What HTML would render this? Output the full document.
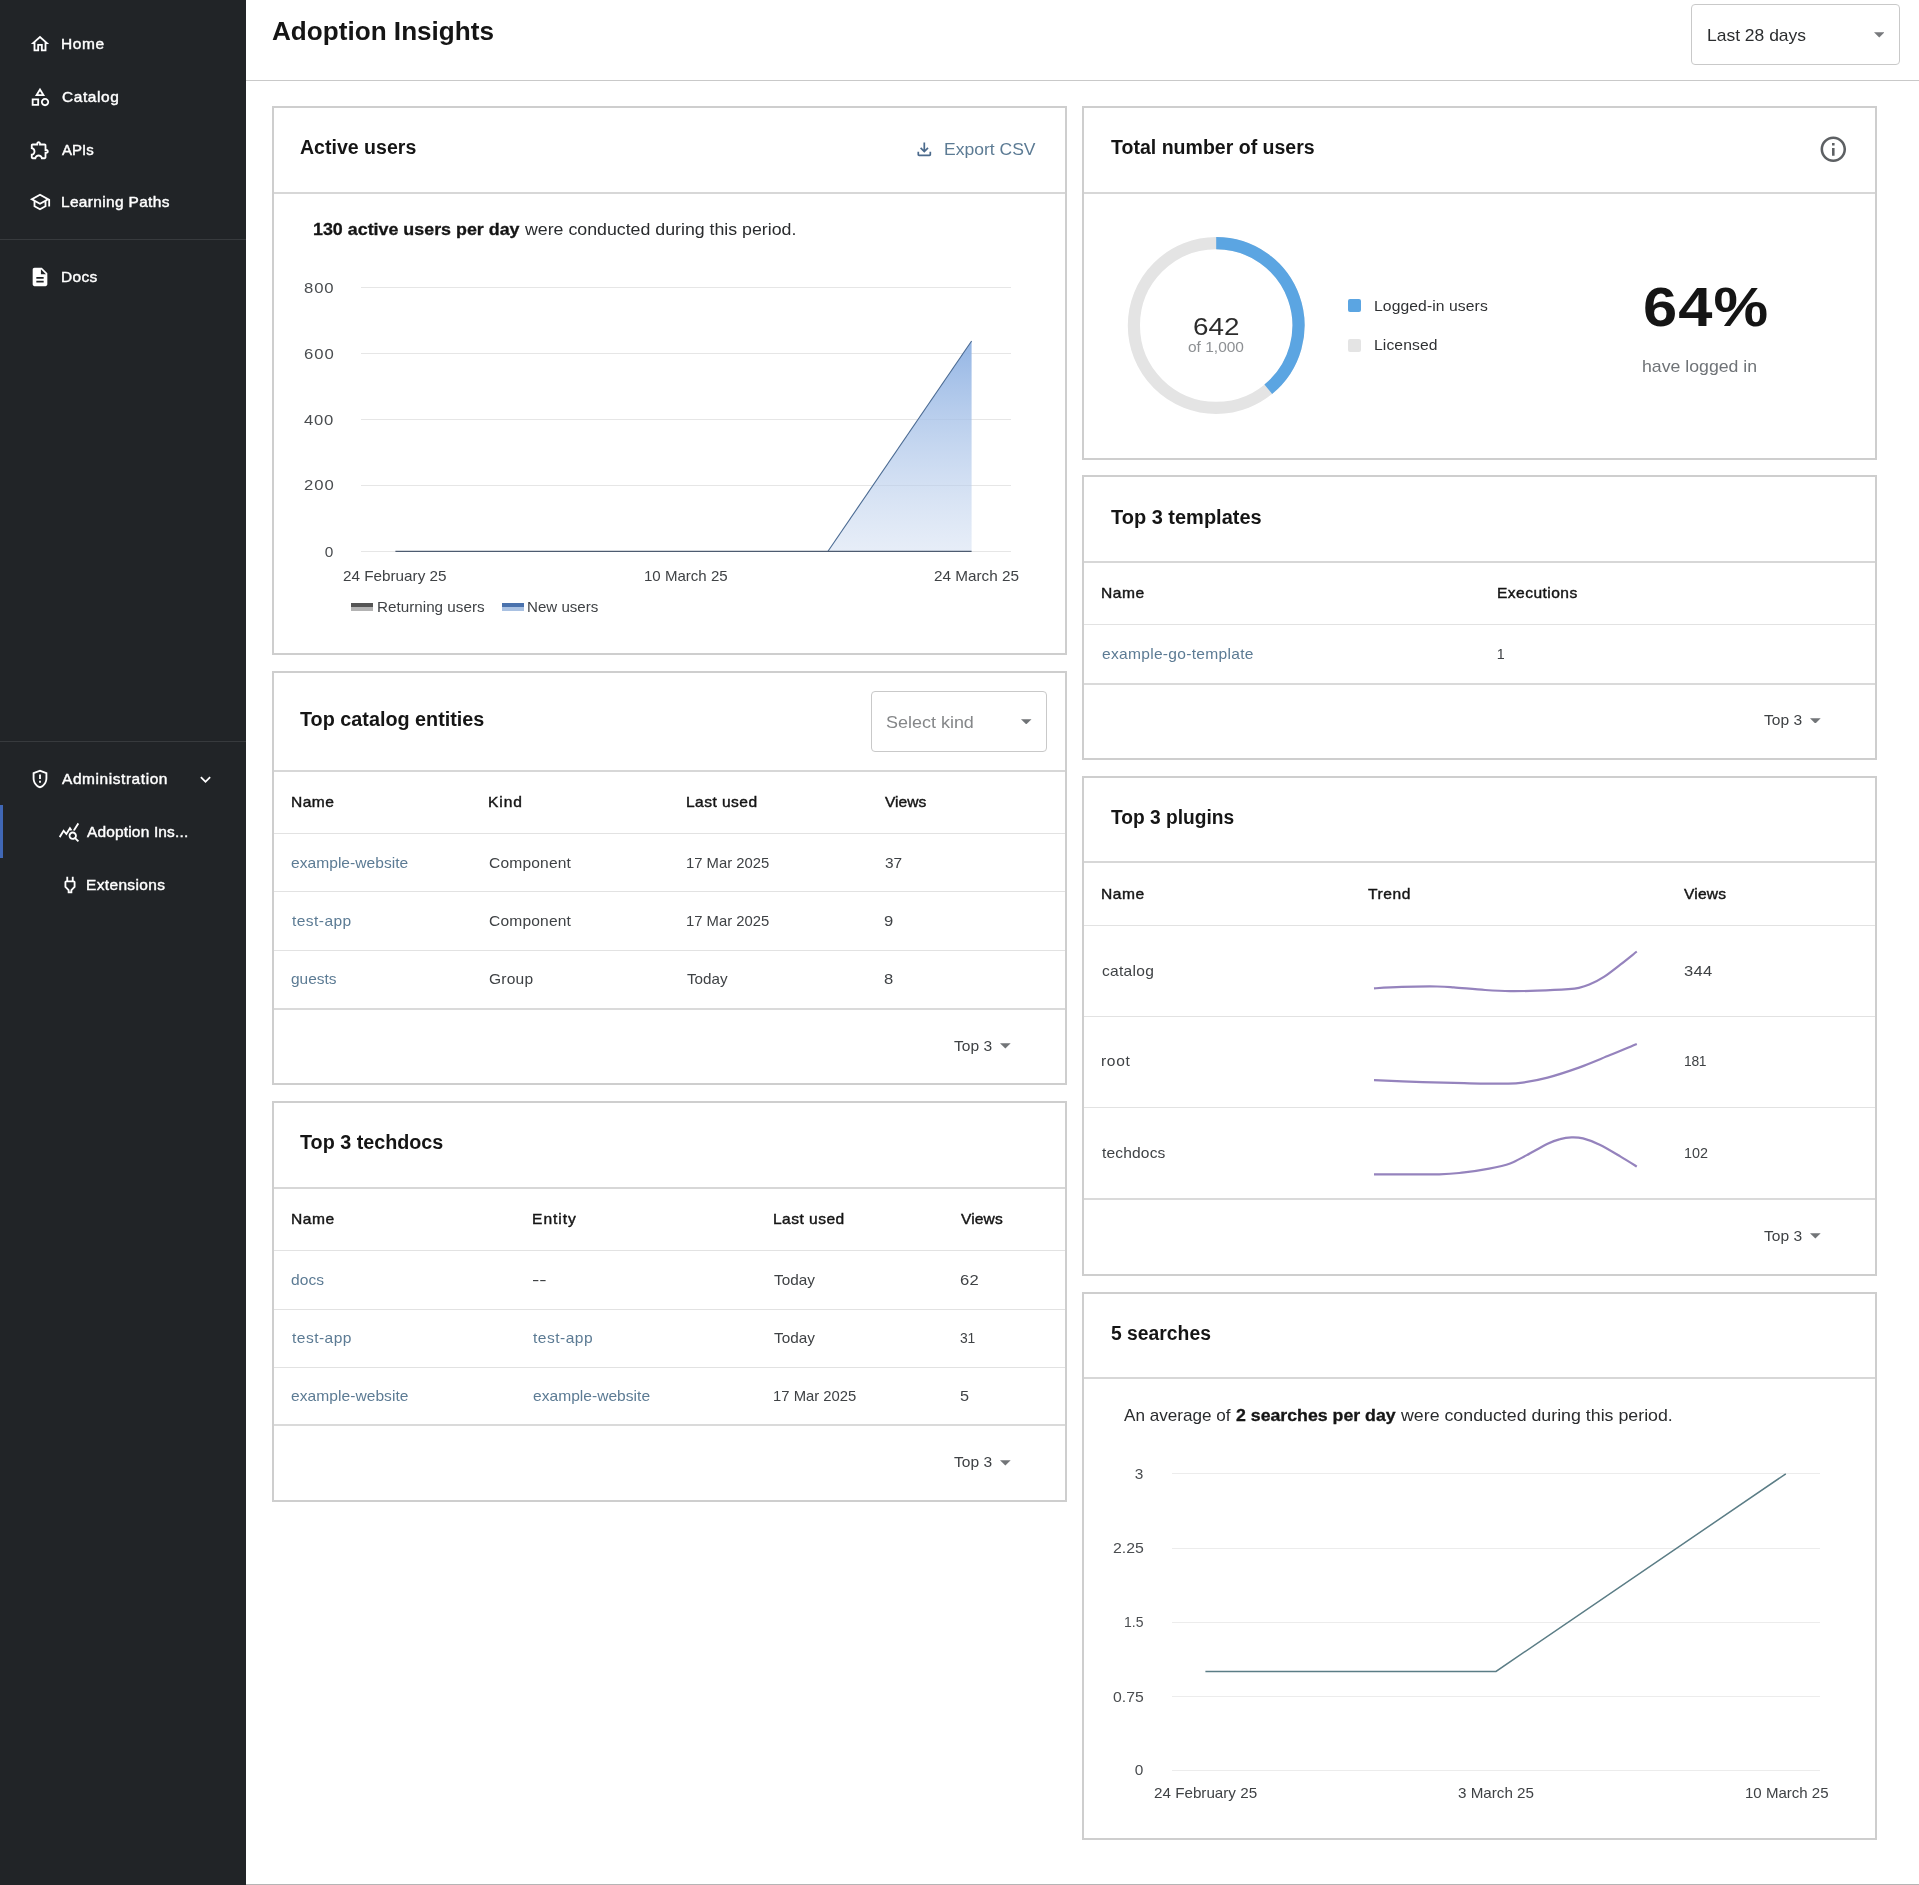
<!DOCTYPE html><html lang="en"><head><meta charset="utf-8"><title>Adoption Insights</title><style>
html,body{margin:0;padding:0;background:#fff}body{width:1919px;height:1885px;position:relative;overflow:hidden;font-family:"Liberation Sans", sans-serif;}
#app{position:absolute;left:0;top:0;width:1919px;height:1885px;will-change:transform}
.t{position:absolute;white-space:nowrap;line-height:1}
</style></head><body><div id="app">
<nav aria-label="Main navigation">
<div style="position:absolute;left:0px;top:0px;width:246px;height:1885px;background:#212427"></div>
<div style="position:absolute;left:0px;top:239px;width:246px;height:1px;background:#373a3d"></div>
<div style="position:absolute;left:0px;top:741px;width:246px;height:1px;background:#373a3d"></div>
<div style="position:absolute;left:0px;top:805px;width:3px;height:53px;background:#4067b5"></div>
<svg style="position:absolute;left:29.00px;top:32.80px" width="22" height="22" viewBox="0 0 24 24"><path fill="#fff" d="m12 5.69 5 4.5V18h-2v-6H9v6H7v-7.81zM12 3 2 12h3v8h6v-6h2v6h6v-8h3z"/></svg>
<svg style="position:absolute;left:29.00px;top:86.10px" width="22" height="22" viewBox="0 0 24 24"><path fill="#fff" d="m12 2-5.5 9h11zm0 3.84L13.93 9h-3.87zM17.5 13c-2.49 0-4.5 2.01-4.5 4.5s2.01 4.5 4.5 4.5 4.5-2.01 4.5-4.5-2.01-4.5-4.5-4.5m0 7c-1.38 0-2.5-1.12-2.5-2.5s1.12-2.5 2.5-2.5 2.5 1.12 2.5 2.5-1.12 2.5-2.5 2.5M3 21.5h8v-8H3zm2-6h4v4H5z"/></svg>
<svg style="position:absolute;left:28.50px;top:139.30px" width="22" height="22" viewBox="0 0 24 24"><path fill="#fff" d="M10.5 4.5c.28 0 .5.22.5.5v2h6v6h2c.28 0 .5.22.5.5s-.22.5-.5.5h-2v6h-2.12c-.68-1.75-2.39-3-4.38-3s-3.7 1.25-4.38 3H4v-2.12c1.75-.68 3-2.39 3-4.38 0-1.99-1.24-3.7-2.99-4.38L4 7h6V5c0-.28.22-.5.5-.5m0-2C9.12 2.5 8 3.62 8 5H4c-1.1 0-1.99.9-1.99 2v3.8h.29c1.49 0 2.7 1.21 2.7 2.7s-1.21 2.7-2.7 2.7H2V20c0 1.1.9 2 2 2h3.8v-.3c0-1.49 1.21-2.7 2.7-2.7s2.7 1.21 2.7 2.7v.3H17c1.1 0 2-.9 2-2v-4c1.38 0 2.5-1.12 2.5-2.5S20.38 11 19 11V7c0-1.1-.9-2-2-2h-4c0-1.38-1.12-2.5-2.5-2.5"/></svg>
<svg style="position:absolute;left:29.00px;top:190.80px" width="22" height="22" viewBox="0 0 24 24"><path fill="#fff" d="M12 3 1 9l4 2.18v6L12 21l7-3.82v-6l2-1.09V17h2V9zm6.82 6L12 12.72 5.18 9 12 5.28zM17 15.99l-5 2.73-5-2.73v-3.72L12 15l5-2.73z"/></svg>
<svg style="position:absolute;left:29.00px;top:266.00px" width="22" height="22" viewBox="0 0 24 24"><path fill="#fff" d="M14 2H6c-1.1 0-1.99.9-1.99 2L4 20c0 1.1.89 2 1.99 2H18c1.1 0 2-.9 2-2V8zm2 16H8v-2h8zm0-4H8v-2h8zm-3-5V3.5L18.5 9z"/></svg>
<svg style="position:absolute;left:29.00px;top:767.80px" width="22" height="22" viewBox="0 0 24 24"><path fill="#fff" d="M12 2 4 5v6.09c0 5.05 3.41 9.76 8 10.91 4.59-1.15 8-5.86 8-10.91V5zm6 9.09c0 4-2.55 7.7-6 8.83-3.45-1.13-6-4.82-6-8.83v-4.7l6-2.25 6 2.25zM11 14h2v2h-2zm0-7h2v5h-2z"/></svg>
<svg style="position:absolute;left:194.50px;top:768.50px" width="21" height="21" viewBox="0 0 24 24"><path fill="#fff" d="M16.59 8.59 12 13.17 7.41 8.59 6 10l6 6 6-6z"/></svg>
<svg style="position:absolute;left:57.50px;top:821.00px" width="22" height="22" viewBox="0 0 24 24"><path fill="#fff" d="M19.88 18.47c.44-.7.7-1.51.7-2.39 0-2.49-2.01-4.5-4.5-4.5s-4.5 2.01-4.5 4.5 2.01 4.5 4.49 4.5c.88 0 1.7-.26 2.39-.7L21.58 23 23 21.58zm-3.8.11c-1.38 0-2.5-1.12-2.5-2.5s1.12-2.5 2.5-2.5 2.5 1.12 2.5 2.5-1.12 2.5-2.5 2.5m-.36-8.5c-.74.02-1.45.18-2.1.45l-.55-.83-3.8 6.18-3.01-3.52-3.63 5.81L1 17l5-8 3 3.5L13 6zm2.59.5c-.64-.28-1.33-.45-2.05-.5L21.38 2 23 3.18z"/></svg>
<svg style="position:absolute;left:58.50px;top:874.00px" width="22" height="22" viewBox="0 0 24 24"><path fill="#fff" d="M16 9v4.66l-3.5 3.51V19h-1v-1.83L8 13.65V9zm0-6h-2v4h-4V3H8v4h-.01C6.9 6.99 6 7.89 6 8.98v5.52L9.5 18v3h5v-3l3.5-3.51V9c0-1.1-.9-2-2-2z"/></svg>
<span class="t" style="left:61.23px;top:37.00px;font-size:14.2px;color:#fff;-webkit-text-stroke:0.4px;letter-spacing:0.578px;transform:scaleX(1.0900);transform-origin:0 0;">Home</span>
<span class="t" style="left:61.71px;top:90.00px;font-size:14.2px;color:#fff;-webkit-text-stroke:0.4px;letter-spacing:0.547px;transform:scaleX(1.0900);transform-origin:0 0;">Catalog</span>
<span class="t" style="left:62.47px;top:143.00px;font-size:14.2px;color:#fff;-webkit-text-stroke:0.4px;transform:scaleX(1.0568);transform-origin:0 0;">APIs</span>
<span class="t" style="left:61.23px;top:195.00px;font-size:14.2px;color:#fff;-webkit-text-stroke:0.4px;letter-spacing:0.309px;transform:scaleX(1.0900);transform-origin:0 0;">Learning Paths</span>
<span class="t" style="left:61.23px;top:270.00px;font-size:14.2px;color:#fff;-webkit-text-stroke:0.4px;letter-spacing:0.334px;transform:scaleX(1.0900);transform-origin:0 0;">Docs</span>
<span class="t" style="left:62.47px;top:772.00px;font-size:14.2px;color:#fff;-webkit-text-stroke:0.4px;letter-spacing:0.525px;transform:scaleX(1.0900);transform-origin:0 0;">Administration</span>
<span class="t" style="left:87.07px;top:825.00px;font-size:14.2px;color:#fff;-webkit-text-stroke:0.4px;letter-spacing:0.156px;transform:scaleX(1.0900);transform-origin:0 0;">Adoption Ins...</span>
<span class="t" style="left:85.83px;top:878.00px;font-size:14.2px;color:#fff;-webkit-text-stroke:0.4px;letter-spacing:0.334px;transform:scaleX(1.0900);transform-origin:0 0;">Extensions</span>
</nav>
<header>
<div style="position:absolute;left:246px;top:80px;width:1673px;height:1px;background:#c9c9c9"></div>
<div style="position:absolute;left:1691px;top:4px;width:207px;height:59px;border:1px solid #c9c9c9;border-radius:4px;box-sizing:content-box"></div>
<svg style="position:absolute;left:1873.75px;top:32.25px" width="10.5" height="5.5" viewBox="0 0 10 5"><path fill="#77797c" d="M0 0h10L5 5z"/></svg>
<div style="position:absolute;left:246px;top:1884px;width:1673px;height:1px;background:#b5b5b5"></div>
<span class="t" style="left:272.35px;top:19.00px;font-size:25.6px;color:#151515;font-weight:700;transform:scaleX(1.0207);transform-origin:0 0;">Adoption Insights</span>
<span class="t" style="left:1706.77px;top:27.00px;font-size:17px;color:#2b2d2f;transform:scaleX(1.0276);transform-origin:0 0;">Last 28 days</span>
</header>
<div class="cards">
<div style="position:absolute;left:272px;top:106px;width:791px;height:545px;border:2px solid #cecece;background:#fff"></div>
<div style="position:absolute;left:274px;top:192px;width:791px;height:2px;background:#d7d7d7"></div>
<div style="position:absolute;left:272px;top:671px;width:791px;height:410px;border:2px solid #cecece;background:#fff"></div>
<div style="position:absolute;left:274px;top:770px;width:791px;height:2px;background:#d7d7d7"></div>
<div style="position:absolute;left:272px;top:1101px;width:791px;height:397px;border:2px solid #cecece;background:#fff"></div>
<div style="position:absolute;left:274px;top:1187px;width:791px;height:2px;background:#d7d7d7"></div>
<div style="position:absolute;left:1082px;top:106px;width:791px;height:350px;border:2px solid #cecece;background:#fff"></div>
<div style="position:absolute;left:1084px;top:192px;width:791px;height:2px;background:#d7d7d7"></div>
<div style="position:absolute;left:1082px;top:475px;width:791px;height:281px;border:2px solid #cecece;background:#fff"></div>
<div style="position:absolute;left:1084px;top:561px;width:791px;height:2px;background:#d7d7d7"></div>
<div style="position:absolute;left:1082px;top:776px;width:791px;height:496px;border:2px solid #cecece;background:#fff"></div>
<div style="position:absolute;left:1084px;top:861px;width:791px;height:2px;background:#d7d7d7"></div>
<div style="position:absolute;left:1082px;top:1292px;width:791px;height:544px;border:2px solid #cecece;background:#fff"></div>
<div style="position:absolute;left:1084px;top:1377px;width:791px;height:2px;background:#d7d7d7"></div>
</div>
<section aria-label="Active users">
<svg style="position:absolute;left:913.50px;top:139.10px" width="20.6" height="20.6" viewBox="0 0 24 24"><path fill="#4b6a8c" d="M18 15v3H6v-3H4v3c0 1.1.9 2 2 2h12c1.1 0 2-.9 2-2v-3zm-1-4-1.41-1.41L13 12.17V4h-2v8.17L8.41 9.59 7 11l5 5z"/></svg>
<div style="position:absolute;left:361px;top:287.4px;width:650px;height:1px;background:#e6e6e6"></div>
<div style="position:absolute;left:361px;top:353.3px;width:650px;height:1px;background:#e6e6e6"></div>
<div style="position:absolute;left:361px;top:419.3px;width:650px;height:1px;background:#e6e6e6"></div>
<div style="position:absolute;left:361px;top:485.2px;width:650px;height:1px;background:#e6e6e6"></div>
<div style="position:absolute;left:361px;top:551.2px;width:650px;height:1px;background:#e6e6e6"></div>
<svg style="position:absolute;left:272px;top:106px" width="795" height="549" viewBox="272 106 795 549">
<defs><linearGradient id="ga" x1="0" y1="0" x2="0" y2="1"><stop offset="0" stop-color="#8fb2e3" stop-opacity="0.95"/><stop offset="1" stop-color="#c9d8ef" stop-opacity="0.45"/></linearGradient></defs>
<path d="M395.4 551.2 L828 551.2 L971.6 341 L971.6 551.2 Z" fill="url(#ga)"/>
<path d="M828 551.2 L971.6 341" fill="none" stroke="#4a6a92" stroke-width="1.1"/>
<path d="M395.4 551.3 L971.6 551.3" fill="none" stroke="#4d5b70" stroke-width="1.2"/>
</svg>
<div style="position:absolute;left:351.2px;top:603px;width:21.8px;height:4.3px;background:#555"></div>
<div style="position:absolute;left:351.2px;top:607.3px;width:21.8px;height:3.9px;background:#b3b3b3"></div>
<div style="position:absolute;left:502.3px;top:603px;width:21.6px;height:4.3px;background:#4a72ad"></div>
<div style="position:absolute;left:502.3px;top:607.3px;width:21.6px;height:3.9px;background:#a9c1e2"></div>
<span class="t" style="left:300.11px;top:138.00px;font-size:19.4px;color:#151515;font-weight:700;transform:scaleX(1.0082);transform-origin:0 0;">Active users</span>
<span class="t" style="left:943.56px;top:142.00px;font-size:16.6px;color:#5c7b94;transform:scaleX(1.0555);transform-origin:0 0;">Export CSV</span>
<span class="t" style="left:313.07px;top:222.00px;font-size:16.6px;color:#151515;font-weight:700;-webkit-text-stroke:0.3px;transform:scaleX(1.0763);transform-origin:0 0;">130 active users per day</span>
<span class="t" style="left:525.23px;top:222.00px;font-size:16.6px;color:#2a2c2e;transform:scaleX(1.0699);transform-origin:0 0;">were conducted during this period.</span>
<span class="t" style="left:303.97px;top:281.00px;font-size:14.4px;color:#4a4d50;letter-spacing:0.742px;transform:scaleX(1.1600);transform-origin:0 0;">800</span>
<span class="t" style="left:303.85px;top:347.00px;font-size:14.4px;color:#4a4d50;letter-spacing:0.794px;transform:scaleX(1.1600);transform-origin:0 0;">600</span>
<span class="t" style="left:304.32px;top:413.00px;font-size:14.4px;color:#4a4d50;letter-spacing:0.594px;transform:scaleX(1.1600);transform-origin:0 0;">400</span>
<span class="t" style="left:303.86px;top:478.00px;font-size:14.4px;color:#4a4d50;letter-spacing:0.791px;transform:scaleX(1.1600);transform-origin:0 0;">200</span>
<span class="t" style="left:324.74px;top:544.00px;font-size:15.4px;color:#4a4d50;">0</span>
<span class="t" style="left:343.13px;top:569.00px;font-size:14.4px;color:#3f4245;transform:scaleX(1.0606);transform-origin:0 0;">24 February 25</span>
<span class="t" style="left:643.65px;top:569.00px;font-size:14.4px;color:#3f4245;transform:scaleX(1.0460);transform-origin:0 0;">10 March 25</span>
<span class="t" style="left:934.03px;top:569.00px;font-size:14.4px;color:#3f4245;transform:scaleX(1.0627);transform-origin:0 0;">24 March 25</span>
<span class="t" style="left:376.75px;top:600.00px;font-size:14.4px;color:#3f4245;transform:scaleX(1.0591);transform-origin:0 0;">Returning users</span>
<span class="t" style="left:527.46px;top:600.00px;font-size:14.4px;color:#3f4245;transform:scaleX(1.0485);transform-origin:0 0;">New users</span>
</section>
<section aria-label="Top catalog entities">
<div style="position:absolute;left:871px;top:691px;width:174px;height:59px;border:1px solid #c9c9c9;border-radius:4px"></div>
<svg style="position:absolute;left:1021.15px;top:718.75px" width="10.5" height="5.5" viewBox="0 0 10 5"><path fill="#707376" d="M0 0h10L5 5z"/></svg>
<div style="position:absolute;left:274px;top:833px;width:791px;height:1px;background:#e2e2e2"></div>
<div style="position:absolute;left:274px;top:891px;width:791px;height:1px;background:#e2e2e2"></div>
<div style="position:absolute;left:274px;top:949.5px;width:791px;height:1px;background:#e2e2e2"></div>
<div style="position:absolute;left:274px;top:1007.5px;width:791px;height:2px;background:#dadada"></div>
<svg style="position:absolute;left:999.95px;top:1043.40px" width="10.7" height="5.8" viewBox="0 0 10 5"><path fill="#727578" d="M0 0h10L5 5z"/></svg>
<span class="t" style="left:300.48px;top:710.00px;font-size:19.4px;color:#151515;font-weight:700;transform:scaleX(1.0204);transform-origin:0 0;">Top catalog entities</span>
<span class="t" style="left:886.08px;top:714.00px;font-size:17px;color:#858789;transform:scaleX(1.0565);transform-origin:0 0;">Select kind</span>
<span class="t" style="left:290.82px;top:795.00px;font-size:14.3px;color:#151515;-webkit-text-stroke:0.4px;letter-spacing:0.428px;transform:scaleX(1.0900);transform-origin:0 0;">Name</span>
<span class="t" style="left:488.32px;top:795.00px;font-size:14.3px;color:#151515;-webkit-text-stroke:0.4px;letter-spacing:0.820px;transform:scaleX(1.0900);transform-origin:0 0;">Kind</span>
<span class="t" style="left:686.02px;top:795.00px;font-size:14.3px;color:#151515;-webkit-text-stroke:0.4px;letter-spacing:0.402px;transform:scaleX(1.0900);transform-origin:0 0;">Last used</span>
<span class="t" style="left:885.03px;top:795.00px;font-size:14.3px;color:#151515;-webkit-text-stroke:0.4px;letter-spacing:0.007px;transform:scaleX(1.0900);transform-origin:0 0;">Views</span>
<span class="t" style="left:291.44px;top:856.00px;font-size:14.3px;color:#5c7b94;letter-spacing:0.021px;transform:scaleX(1.0900);transform-origin:0 0;">example-website</span>
<span class="t" style="left:488.81px;top:856.00px;font-size:14.3px;color:#3f4245;letter-spacing:0.153px;transform:scaleX(1.0900);transform-origin:0 0;">Component</span>
<span class="t" style="left:686.17px;top:856.00px;font-size:14.3px;color:#3f4245;transform:scaleX(1.0370);transform-origin:0 0;">17 Mar 2025</span>
<span class="t" style="left:884.51px;top:856.00px;font-size:14.3px;color:#3f4245;transform:scaleX(1.0791);transform-origin:0 0;">37</span>
<span class="t" style="left:291.86px;top:914.00px;font-size:14.3px;color:#5c7b94;letter-spacing:0.389px;transform:scaleX(1.0900);transform-origin:0 0;">test-app</span>
<span class="t" style="left:488.81px;top:914.00px;font-size:14.3px;color:#3f4245;letter-spacing:0.153px;transform:scaleX(1.0900);transform-origin:0 0;">Component</span>
<span class="t" style="left:686.17px;top:914.00px;font-size:14.3px;color:#3f4245;transform:scaleX(1.0370);transform-origin:0 0;">17 Mar 2025</span>
<span class="t" style="left:884.32px;top:914.00px;font-size:14.3px;color:#3f4245;transform:scaleX(1.1600);transform-origin:0 0;">9</span>
<span class="t" style="left:291.45px;top:972.00px;font-size:14.3px;color:#5c7b94;transform:scaleX(1.0827);transform-origin:0 0;">guests</span>
<span class="t" style="left:488.82px;top:972.00px;font-size:14.3px;color:#3f4245;letter-spacing:0.186px;transform:scaleX(1.0900);transform-origin:0 0;">Group</span>
<span class="t" style="left:686.96px;top:972.00px;font-size:14.3px;color:#3f4245;transform:scaleX(1.0659);transform-origin:0 0;">Today</span>
<span class="t" style="left:884.38px;top:972.00px;font-size:14.3px;color:#3f4245;transform:scaleX(1.1600);transform-origin:0 0;">8</span>
<span class="t" style="left:953.85px;top:1039.00px;font-size:14.3px;color:#3f4245;transform:scaleX(1.0900);transform-origin:0 0;">Top 3</span>
</section>
<section aria-label="Top 3 techdocs">
<div style="position:absolute;left:274px;top:1250px;width:791px;height:1px;background:#e2e2e2"></div>
<div style="position:absolute;left:274px;top:1308.5px;width:791px;height:1px;background:#e2e2e2"></div>
<div style="position:absolute;left:274px;top:1366.8px;width:791px;height:1px;background:#e2e2e2"></div>
<div style="position:absolute;left:274px;top:1424.3px;width:791px;height:2px;background:#dadada"></div>
<svg style="position:absolute;left:999.85px;top:1460.10px" width="10.7" height="5.8" viewBox="0 0 10 5"><path fill="#727578" d="M0 0h10L5 5z"/></svg>
<span class="t" style="left:300.38px;top:1133.00px;font-size:19.4px;color:#151515;font-weight:700;transform:scaleX(1.0181);transform-origin:0 0;">Top 3 techdocs</span>
<span class="t" style="left:290.82px;top:1212.00px;font-size:14.3px;color:#151515;-webkit-text-stroke:0.4px;letter-spacing:0.458px;transform:scaleX(1.0900);transform-origin:0 0;">Name</span>
<span class="t" style="left:532.12px;top:1212.00px;font-size:14.3px;color:#151515;-webkit-text-stroke:0.4px;letter-spacing:0.904px;transform:scaleX(1.0900);transform-origin:0 0;">Entity</span>
<span class="t" style="left:772.92px;top:1212.00px;font-size:14.3px;color:#151515;-webkit-text-stroke:0.4px;letter-spacing:0.413px;transform:scaleX(1.0900);transform-origin:0 0;">Last used</span>
<span class="t" style="left:960.63px;top:1212.00px;font-size:14.3px;color:#151515;-webkit-text-stroke:0.4px;letter-spacing:0.099px;transform:scaleX(1.0900);transform-origin:0 0;">Views</span>
<span class="t" style="left:291.45px;top:1273.00px;font-size:14.3px;color:#5c7b94;letter-spacing:0.029px;transform:scaleX(1.0900);transform-origin:0 0;">docs</span>
<span class="t" style="left:532.42px;top:1273.00px;font-size:14.3px;color:#3f4245;transform:scaleX(1.5374);transform-origin:0 0;">--</span>
<span class="t" style="left:773.86px;top:1273.00px;font-size:14.3px;color:#3f4245;transform:scaleX(1.0712);transform-origin:0 0;">Today</span>
<span class="t" style="left:959.86px;top:1273.00px;font-size:14.3px;color:#3f4245;letter-spacing:0.194px;transform:scaleX(1.1600);transform-origin:0 0;">62</span>
<span class="t" style="left:291.86px;top:1331.00px;font-size:14.3px;color:#5c7b94;letter-spacing:0.415px;transform:scaleX(1.0900);transform-origin:0 0;">test-app</span>
<span class="t" style="left:533.16px;top:1331.00px;font-size:14.3px;color:#5c7b94;letter-spacing:0.428px;transform:scaleX(1.0900);transform-origin:0 0;">test-app</span>
<span class="t" style="left:773.86px;top:1331.00px;font-size:14.3px;color:#3f4245;transform:scaleX(1.0712);transform-origin:0 0;">Today</span>
<span class="t" style="left:960.17px;top:1331.00px;font-size:14.3px;color:#3f4245;letter-spacing:-0.300px;transform:scaleX(0.9700);transform-origin:0 0;">31</span>
<span class="t" style="left:291.44px;top:1389.00px;font-size:14.3px;color:#5c7b94;letter-spacing:0.034px;transform:scaleX(1.0900);transform-origin:0 0;">example-website</span>
<span class="t" style="left:532.74px;top:1389.00px;font-size:14.3px;color:#5c7b94;letter-spacing:0.008px;transform:scaleX(1.0900);transform-origin:0 0;">example-website</span>
<span class="t" style="left:773.07px;top:1389.00px;font-size:14.3px;color:#3f4245;transform:scaleX(1.0383);transform-origin:0 0;">17 Mar 2025</span>
<span class="t" style="left:960.05px;top:1389.00px;font-size:14.3px;color:#3f4245;transform:scaleX(1.1357);transform-origin:0 0;">5</span>
<span class="t" style="left:953.75px;top:1455.00px;font-size:14.3px;color:#3f4245;transform:scaleX(1.0900);transform-origin:0 0;">Top 3</span>
</section>
<section aria-label="Total number of users">
<svg style="position:absolute;left:1817.70px;top:134.00px" width="30.6" height="30.6" viewBox="0 0 24 24"><path fill="#5d6063" d="M11 7h2v2h-2zm0 4h2v6h-2zm1-9C6.48 2 2 6.48 2 12s4.48 10 10 10 10-4.48 10-10S17.52 2 12 2m0 18c-4.41 0-8-3.59-8-8s3.59-8 8-8 8 3.59 8 8-3.59 8-8 8"/></svg>
<svg style="position:absolute;left:1100px;top:220px" width="240" height="220" viewBox="1100 220 240 220">
<circle cx="1216.2" cy="325.5" r="82.3" fill="none" stroke="#e4e4e4" stroke-width="12.2"/>
<path d="M1216.2 243.2 A82.3 82.3 0 0 1 1268.27 389.24" fill="none" stroke="#5ba5e2" stroke-width="12.2"/>
</svg>
<div style="position:absolute;left:1348px;top:299px;width:13px;height:13px;background:#5ba5e2;border-radius:2px"></div>
<div style="position:absolute;left:1348px;top:339px;width:13px;height:13px;background:#e4e4e4;border-radius:2px"></div>
<span class="t" style="left:1110.78px;top:138.00px;font-size:19.4px;color:#151515;font-weight:700;transform:scaleX(1.0075);transform-origin:0 0;">Total number of users</span>
<span class="t" style="left:1192.99px;top:315.00px;font-size:24px;color:#151515;opacity:.9;transform:scaleX(1.1589);transform-origin:0 0;">642</span>
<span class="t" style="left:1188.20px;top:340.00px;font-size:14.2px;color:#8d9093;letter-spacing:0.008px;transform:scaleX(1.0900);transform-origin:0 0;">of 1,000</span>
<span class="t" style="left:1373.51px;top:299.00px;font-size:14.4px;color:#2f3133;letter-spacing:0.083px;transform:scaleX(1.0900);transform-origin:0 0;">Logged-in users</span>
<span class="t" style="left:1373.51px;top:338.00px;font-size:14.4px;color:#2f3133;letter-spacing:0.092px;transform:scaleX(1.0900);transform-origin:0 0;">Licensed</span>
<span class="t" style="left:1642.95px;top:279.00px;font-size:56.4px;color:#151515;font-weight:700;letter-spacing:0.935px;transform:scaleX(1.0900);transform-origin:0 0;">64%</span>
<span class="t" style="left:1642.27px;top:358.00px;font-size:17px;color:#6f7377;transform:scaleX(1.0405);transform-origin:0 0;">have logged in</span>
</section>
<section aria-label="Top 3 templates">
<div style="position:absolute;left:1084px;top:624.3px;width:791px;height:1px;background:#e2e2e2"></div>
<div style="position:absolute;left:1084px;top:682.5px;width:791px;height:2px;background:#dadada"></div>
<svg style="position:absolute;left:1810.35px;top:717.50px" width="10.7" height="5.8" viewBox="0 0 10 5"><path fill="#727578" d="M0 0h10L5 5z"/></svg>
<span class="t" style="left:1111.38px;top:508.00px;font-size:19.4px;color:#151515;font-weight:700;transform:scaleX(1.0305);transform-origin:0 0;">Top 3 templates</span>
<span class="t" style="left:1100.92px;top:586.00px;font-size:14.3px;color:#151515;-webkit-text-stroke:0.4px;letter-spacing:0.489px;transform:scaleX(1.0900);transform-origin:0 0;">Name</span>
<span class="t" style="left:1496.52px;top:586.00px;font-size:14.3px;color:#151515;-webkit-text-stroke:0.4px;letter-spacing:0.409px;transform:scaleX(1.0900);transform-origin:0 0;">Executions</span>
<span class="t" style="left:1101.54px;top:647.00px;font-size:14.3px;color:#5c7b94;letter-spacing:0.258px;transform:scaleX(1.0900);transform-origin:0 0;">example-go-template</span>
<span class="t" style="left:1496.71px;top:647.00px;font-size:14.3px;color:#3f4245;">1</span>
<span class="t" style="left:1764.25px;top:713.00px;font-size:14.3px;color:#3f4245;transform:scaleX(1.0900);transform-origin:0 0;">Top 3</span>
</section>
<section aria-label="Top 3 plugins">
<div style="position:absolute;left:1084px;top:924.5px;width:791px;height:1px;background:#e2e2e2"></div>
<div style="position:absolute;left:1084px;top:1015.6px;width:791px;height:1px;background:#e2e2e2"></div>
<div style="position:absolute;left:1084px;top:1106.8px;width:791px;height:1px;background:#e2e2e2"></div>
<div style="position:absolute;left:1084px;top:1197.8px;width:791px;height:2px;background:#dadada"></div>
<svg style="position:absolute;left:1360px;top:930px" width="300" height="260" viewBox="1360 930 300 260" fill="none" stroke="#9583bd" stroke-width="2.2" stroke-linecap="butt"><path d="M1374.0 988.4 C1378.6 988.1 1391.2 987.2 1401.7 986.9 C1412.2 986.6 1428.4 986.4 1437.1 986.5 C1445.8 986.6 1445.8 986.7 1453.8 987.3 C1461.8 987.9 1475.7 989.4 1485.1 990.0 C1494.5 990.6 1501.4 991.0 1510.1 991.1 C1518.8 991.2 1527.5 991.0 1537.2 990.7 C1546.9 990.4 1561.5 989.7 1568.4 989.2 C1575.4 988.7 1575.4 988.7 1578.9 987.9 C1582.4 987.1 1585.1 986.4 1589.3 984.6 C1593.5 982.8 1598.7 980.3 1603.9 976.9 C1609.1 973.5 1615.1 968.6 1620.6 964.4 C1626.1 960.2 1634.1 953.6 1636.8 951.5"/><path d="M1374.0 1080.1 C1382.1 1080.4 1407.5 1081.7 1422.5 1082.2 C1437.5 1082.7 1450.3 1083.0 1464.2 1083.2 C1478.1 1083.4 1496.2 1083.7 1505.9 1083.6 C1515.6 1083.5 1515.6 1083.6 1522.6 1082.6 C1529.5 1081.6 1538.2 1080.1 1547.6 1077.6 C1557.0 1075.1 1568.5 1071.3 1578.9 1067.6 C1589.3 1063.8 1600.4 1059.0 1610.1 1055.1 C1619.8 1051.2 1632.3 1045.8 1636.8 1044.0"/><path d="M1374.0 1174.3 C1384.9 1174.3 1424.2 1174.6 1439.2 1174.3 C1454.2 1174.0 1455.9 1173.3 1464.2 1172.4 C1472.5 1171.5 1481.6 1170.2 1489.2 1168.7 C1496.8 1167.2 1503.8 1165.8 1510.1 1163.5 C1516.4 1161.2 1520.5 1158.4 1526.8 1155.1 C1533.0 1151.8 1542.0 1146.4 1547.6 1143.7 C1553.1 1141.0 1556.1 1140.1 1560.1 1139.1 C1564.1 1138.0 1567.8 1137.5 1571.6 1137.4 C1575.4 1137.3 1578.3 1137.2 1583.0 1138.4 C1587.7 1139.6 1593.4 1141.7 1599.7 1144.7 C1606.0 1147.7 1614.4 1152.9 1620.6 1156.6 C1626.8 1160.2 1634.1 1164.9 1636.8 1166.6"/></svg>
<svg style="position:absolute;left:1810.35px;top:1233.40px" width="10.7" height="5.8" viewBox="0 0 10 5"><path fill="#727578" d="M0 0h10L5 5z"/></svg>
<span class="t" style="left:1111.08px;top:808.00px;font-size:19.4px;color:#151515;font-weight:700;transform:scaleX(0.9888);transform-origin:0 0;">Top 3 plugins</span>
<span class="t" style="left:1100.92px;top:887.00px;font-size:14.3px;color:#151515;-webkit-text-stroke:0.4px;letter-spacing:0.458px;transform:scaleX(1.0900);transform-origin:0 0;">Name</span>
<span class="t" style="left:1368.15px;top:887.00px;font-size:14.3px;color:#151515;-webkit-text-stroke:0.4px;letter-spacing:0.507px;transform:scaleX(1.0900);transform-origin:0 0;">Trend</span>
<span class="t" style="left:1684.33px;top:887.00px;font-size:14.3px;color:#151515;-webkit-text-stroke:0.4px;letter-spacing:0.145px;transform:scaleX(1.0900);transform-origin:0 0;">Views</span>
<span class="t" style="left:1101.54px;top:964.00px;font-size:14.3px;color:#3f4245;letter-spacing:0.246px;transform:scaleX(1.0900);transform-origin:0 0;">catalog</span>
<span class="t" style="left:1684.17px;top:964.00px;font-size:14.3px;color:#3f4245;letter-spacing:0.233px;transform:scaleX(1.1600);transform-origin:0 0;">344</span>
<span class="t" style="left:1101.16px;top:1054.00px;font-size:14.3px;color:#3f4245;letter-spacing:0.609px;transform:scaleX(1.0900);transform-origin:0 0;">root</span>
<span class="t" style="left:1683.74px;top:1054.00px;font-size:14.3px;color:#3f4245;letter-spacing:-0.300px;transform:scaleX(0.9700);transform-origin:0 0;">181</span>
<span class="t" style="left:1101.96px;top:1146.00px;font-size:14.3px;color:#3f4245;letter-spacing:0.133px;transform:scaleX(1.0900);transform-origin:0 0;">techdocs</span>
<span class="t" style="left:1683.70px;top:1146.00px;font-size:14.3px;color:#3f4245;transform:scaleX(1.0068);transform-origin:0 0;">102</span>
<span class="t" style="left:1764.25px;top:1229.00px;font-size:14.3px;color:#3f4245;transform:scaleX(1.0900);transform-origin:0 0;">Top 3</span>
</section>
<section aria-label="Searches">
<div style="position:absolute;left:1172px;top:1473px;width:648px;height:1px;background:#ececec"></div>
<div style="position:absolute;left:1172px;top:1548px;width:648px;height:1px;background:#ececec"></div>
<div style="position:absolute;left:1172px;top:1622px;width:648px;height:1px;background:#ececec"></div>
<div style="position:absolute;left:1172px;top:1696px;width:648px;height:1px;background:#ececec"></div>
<div style="position:absolute;left:1172px;top:1770px;width:648px;height:1px;background:#ececec"></div>
<svg style="position:absolute;left:1082px;top:1380px" width="795" height="460" viewBox="1082 1380 795 460">
<path d="M1205.4 1671.4 L1496 1671.4 L1785.8 1473.8" fill="none" stroke="#5b7d86" stroke-width="1.5"/>
</svg>
<span class="t" style="left:1110.71px;top:1324.00px;font-size:19.4px;color:#151515;font-weight:700;transform:scaleX(0.9961);transform-origin:0 0;">5 searches</span>
<span class="t" style="left:1124.27px;top:1408.00px;font-size:16.6px;color:#2a2c2e;transform:scaleX(1.0308);transform-origin:0 0;">An average of</span>
<span class="t" style="left:1235.59px;top:1408.00px;font-size:16.6px;color:#151515;font-weight:700;-webkit-text-stroke:0.3px;transform:scaleX(1.0680);transform-origin:0 0;">2 searches per day</span>
<span class="t" style="left:1400.53px;top:1408.00px;font-size:16.6px;color:#2a2c2e;transform:scaleX(1.0715);transform-origin:0 0;">were conducted during this period.</span>
<span class="t" style="left:1134.71px;top:1466.00px;font-size:15.4px;color:#4a4d50;">3</span>
<span class="t" style="left:1112.50px;top:1541.00px;font-size:14.4px;color:#4a4d50;transform:scaleX(1.1017);transform-origin:0 0;">2.25</span>
<span class="t" style="left:1123.83px;top:1615.00px;font-size:14.4px;color:#4a4d50;transform:scaleX(0.9719);transform-origin:0 0;">1.5</span>
<span class="t" style="left:1112.68px;top:1690.00px;font-size:14.4px;color:#4a4d50;transform:scaleX(1.0950);transform-origin:0 0;">0.75</span>
<span class="t" style="left:1134.64px;top:1762.00px;font-size:15.4px;color:#4a4d50;">0</span>
<span class="t" style="left:1153.53px;top:1786.00px;font-size:14.4px;color:#3f4245;transform:scaleX(1.0565);transform-origin:0 0;">24 February 25</span>
<span class="t" style="left:1457.82px;top:1786.00px;font-size:14.4px;color:#3f4245;transform:scaleX(1.0558);transform-origin:0 0;">3 March 25</span>
<span class="t" style="left:1744.85px;top:1786.00px;font-size:14.4px;color:#3f4245;transform:scaleX(1.0447);transform-origin:0 0;">10 March 25</span>
</section>
</div></body></html>
